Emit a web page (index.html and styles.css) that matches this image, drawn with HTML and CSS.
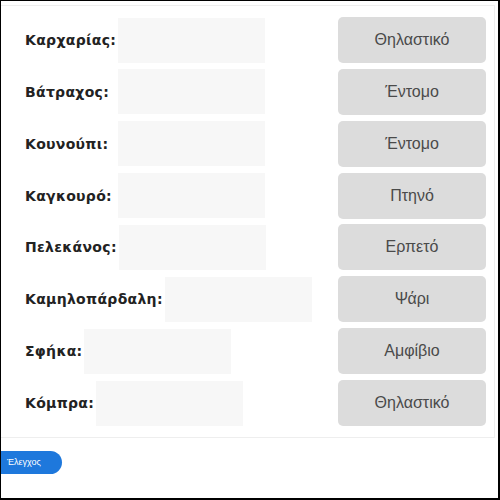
FILE: index.html
```html
<!DOCTYPE html>
<html lang="el">
<head>
<meta charset="utf-8">
<link rel="stylesheet" href="styles.css">
</head>
<body>
<div class="frame">
  <div class="card">
    <div class="rows">
      <div class="row"><span class="label wide">Καρχαρίας:</span><span class="box"></span><span class="ans">Θηλαστικό</span></div>
      <div class="row"><span class="label wide">Βάτραχος:</span><span class="box"></span><span class="ans">Έντομο</span></div>
      <div class="row"><span class="label wide">Κουνούπι:</span><span class="box"></span><span class="ans">Έντομο</span></div>
      <div class="row"><span class="label wide">Καγκουρό:</span><span class="box"></span><span class="ans">Πτηνό</span></div>
      <div class="row"><span class="label">Πελεκάνος:</span><span class="box"></span><span class="ans">Ερπετό</span></div>
      <div class="row"><span class="label">Καμηλοπάρδαλη:</span><span class="box"></span><span class="ans">Ψάρι</span></div>
      <div class="row"><span class="label">Σφήκα:</span><span class="box"></span><span class="ans">Αμφίβιο</span></div>
      <div class="row"><span class="label">Κόμπρα:</span><span class="box"></span><span class="ans">Θηλαστικό</span></div>
    </div>
  </div>
  <div class="actions"><button class="check">Έλεγχος</button></div>
</div>
</body>
</html>
```

FILE: styles.css
```css
html, body {
  margin: 0;
  padding: 0;
  background: #fff;
}
.frame {
  width: 500px;
  height: 500px;
  box-sizing: border-box;
  border: 1px solid #000;
  border-right-width: 2px;
  border-bottom-width: 2px;
  overflow: hidden;
  font-family: "DejaVu Sans", Verdana, sans-serif;
}
.card {
  margin-top: 4px;
  margin-left: -10px;
  width: 504px;
  box-sizing: border-box;
  border: 1px solid #eeeeee;
  padding: 11px 0 11px 33px;
}
.rows {
  display: flex;
  flex-direction: column;
  gap: 5.86px;
}
.row {
  display: flex;
  align-items: center;
  height: 46px;
}
.label {
  font-weight: bold;
  font-size: 14px;
  color: #222;
  letter-spacing: 0.3px;
  padding-right: 2px;
}
.label.wide {
  min-width: 91px;
}
.box {
  width: 147px;
  height: 45px;
  background: #f7f7f7;
}
.ans {
  margin-left: auto;
  margin-right: 8px;
  width: 148px;
  height: 46px;
  border-radius: 5px;
  background: #dcdcdc;
  color: #4a4a4a;
  font-family: "Liberation Sans", Arial, sans-serif;
  font-size: 16px;
  display: flex;
  align-items: center;
  justify-content: center;
}
.actions {
  padding-top: 12px;
}
.check {
  margin-left: -12px;
  height: 23px;
  width: 73px;
  border: none;
  border-radius: 12px;
  background: #1e78dc;
  color: #fff;
  font-family: "Liberation Sans", Arial, sans-serif;
  font-size: 9px;
  padding: 0 0 0 18px;
  text-align: left;
}
```
